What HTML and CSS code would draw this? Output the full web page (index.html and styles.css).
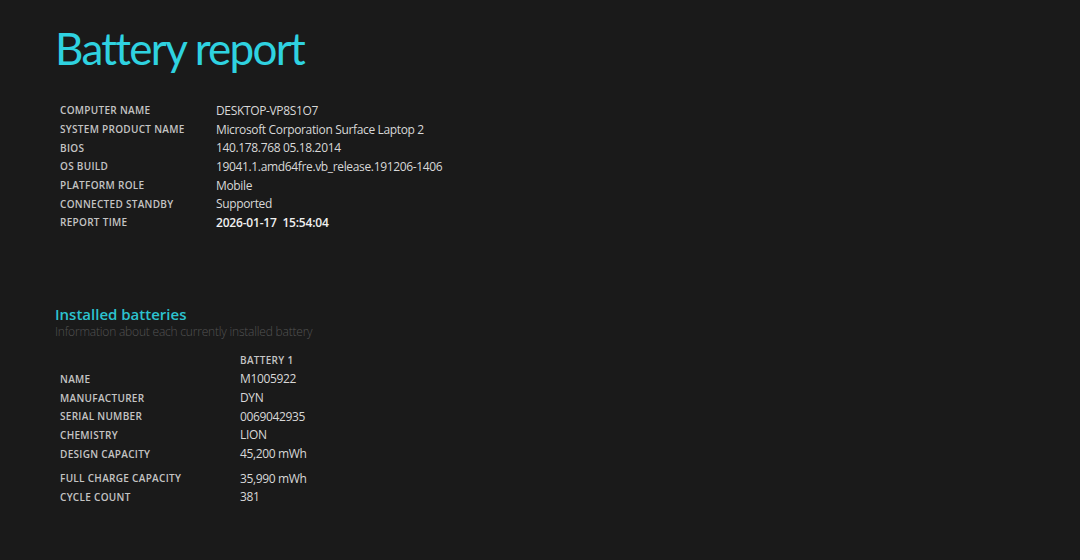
FILE: index.html
```html
<!DOCTYPE html>
<html>
<head>
<meta charset="utf-8">
<link rel="stylesheet" href="styles.css">
</head>
<body>
<div class="page">
  <h1 class="title">Battery report</h1>
  <table class="info">
    <tr><td class="label">COMPUTER NAME</td><td class="value">DESKTOP-VP8S1O7</td></tr>
    <tr><td class="label">SYSTEM PRODUCT NAME</td><td class="value">Microsoft Corporation Surface Laptop 2</td></tr>
    <tr><td class="label">BIOS</td><td class="value">140.178.768 05.18.2014</td></tr>
    <tr><td class="label">OS BUILD</td><td class="value">19041.1.amd64fre.vb_release.191206-1406</td></tr>
    <tr><td class="label">PLATFORM ROLE</td><td class="value">Mobile</td></tr>
    <tr><td class="label">CONNECTED STANDBY</td><td class="value">Supported</td></tr>
    <tr><td class="label">REPORT TIME</td><td class="value strong">2026-01-17&nbsp;&nbsp;15:54:04</td></tr>
  </table>

  <h2 class="section-title">Installed batteries</h2>
  <div class="section-sub">Information about each currently installed battery</div>

  <table class="batteries">
    <tr class="head"><td></td><td class="label">BATTERY 1</td></tr>
    <tr><td class="label">NAME</td><td class="value">M1005922</td></tr>
    <tr><td class="label">MANUFACTURER</td><td class="value">DYN</td></tr>
    <tr><td class="label">SERIAL NUMBER</td><td class="value">0069042935</td></tr>
    <tr><td class="label">CHEMISTRY</td><td class="value">LION</td></tr>
    <tr class="gap-after"><td class="label">DESIGN CAPACITY</td><td class="value">45,200 mWh</td></tr>
    <tr><td class="label">FULL CHARGE CAPACITY</td><td class="value">35,990 mWh</td></tr>
    <tr><td class="label">CYCLE COUNT</td><td class="value">381</td></tr>
  </table>
</div>
</body>
</html>
```

FILE: styles.css
```css
html, body {
  margin: 0;
  padding: 0;
  background: #1a1a1a;
}
body {
  font-family: "Open Sans", "Noto Sans", sans-serif;
  color: #d8d8d8;
  height: 560px;
  overflow: hidden;
}
.page {
  padding: 21px 0 0 55px;
}
.title {
  margin: 0;
  font-family: "Lato", "Open Sans", sans-serif;
  font-weight: 400;
  font-size: 44px;
  line-height: 54px;
  color: #2fd2e0;
  letter-spacing: -1.7px;
}
table {
  border-collapse: collapse;
}
td {
  padding: 0;
  height: 18.7px;
  vertical-align: middle;
}
.info {
  margin: 26px 0 0 5px;
}
.info .label {
  width: 156px;
}
.label {
  font-size: 10px;
  font-weight: 600;
  color: #c4c4c4;
  letter-spacing: 0.3px;
}
.value {
  font-size: 12px;
  color: #d8d8d8;
  letter-spacing: -0.35px;
}
.value.strong {
  font-weight: 600;
  color: #f0f0f0;
  letter-spacing: -0.2px;
}
.section-title {
  margin: 72px 0 0 0;
  font-size: 15px;
  font-weight: 600;
  line-height: 20px;
  color: #2cc3d0;
}
.section-sub {
  font-size: 12px;
  font-weight: 300;
  line-height: 16px;
  color: #535353;
  letter-spacing: -0.2px;
}
.batteries {
  margin: 11px 0 0 5px;
}
.batteries td:first-child {
  width: 180px;
}
.batteries .gap-after td {
  padding-bottom: 6px;
}
```
